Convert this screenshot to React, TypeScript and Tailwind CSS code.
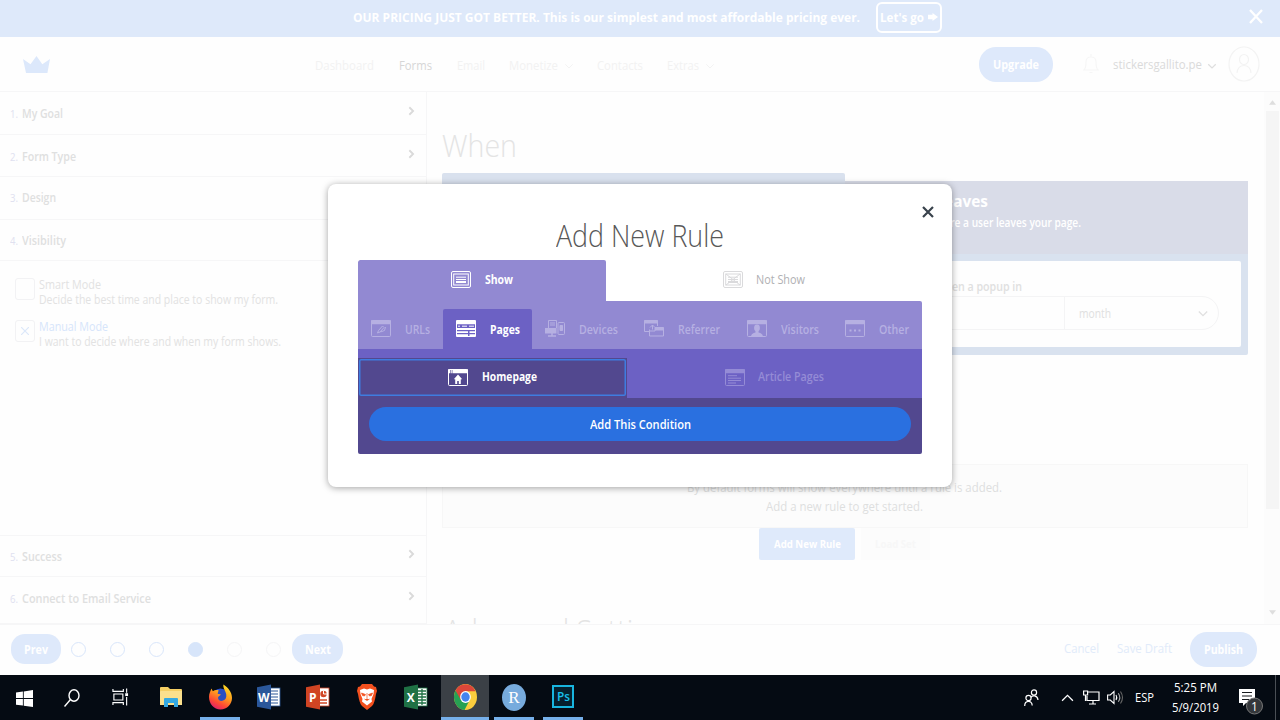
import { useLayoutEffect, useRef, useState, type ReactNode } from "react";

/* Condenses one line of text to the width of its box. */
function Fit({ className, children }: { className: string; children: ReactNode }) {
  const box = useRef<HTMLDivElement>(null);
  const text = useRef<HTMLSpanElement>(null);
  const [scale, setScale] = useState(1);
  useLayoutEffect(() => {
    if (box.current && text.current && text.current.offsetWidth > 0) {
      setScale(box.current.clientWidth / text.current.getBoundingClientRect().width);
    }
  }, []);
  return (
    <div ref={box} className={"flex shrink-0 whitespace-nowrap " + className}>
      <span ref={text} className="inline-block shrink-0 origin-left" style={{ transform: `scaleX(${scale})` }}>
        {children}
      </span>
    </div>
  );
}

function Chevron({ className, dir = "down", w = 1.6 }: { className: string; dir?: "down" | "right" | "up"; w?: number }) {
  const d = dir === "down" ? "M1 3l5 5 5-5" : dir === "up" ? "M1 9l5-5 5 5" : "M4 1.500l4.500 4.500-4.500 4.500";
  return (
    <svg viewBox="0 0 12 12" className={"shrink-0 " + className} fill="none" stroke="currentColor" strokeWidth={w}>
      <path d={d} />
    </svg>
  );
}

function PromoBar() {
  return (
    <div className="flex h-[37px] shrink-0 items-start bg-[#dee9fa] text-white">
      <Fit className="ml-[353px] mt-[8px] w-[507px] text-[13px] leading-[18px] font-bold">
        OUR PRICING JUST GOT BETTER. This is our simplest and most affordable pricing ever.
      </Fit>
      <div className="ml-4 mt-[2px] flex h-[31px] w-[66px] items-center rounded-[6px] border-2 border-white pb-[2px] pl-[2px]">
        <Fit className="w-[44px] text-[13px] leading-[18px] font-bold">Let's go</Fit>
        <svg viewBox="0 0 10 8" className="ml-[4px] h-2 w-[10px]" fill="currentColor">
          <path d="M0 1.800h4.500V0L10 4 4.500 8V6.200H0z" />
        </svg>
      </div>
      <svg viewBox="0 0 14 15" className="ml-[307px] mt-[9px] h-[15px] w-[14px]" stroke="currentColor" strokeWidth="2.300">
        <path d="M1 1l12 13M13 1L1 14" />
      </svg>
    </div>
  );
}

function NavBar() {
  return (
    <div className="flex h-[55px] shrink-0 items-center border-b border-[#f6f6f7] text-[12.500px] leading-[18px] text-[#f2f2f2]">
      <svg viewBox="0 0 27 17" className="ml-[23px] h-[17px] w-[27px] text-[#dce8fb]" fill="currentColor">
        <path d="M0 3l7.500 5.200L13.500 0l5.800 8.200L27 3l-2.600 14H3z" />
      </svg>
      <div className="flex items-center pt-[3px]">
        <Fit className="ml-[265px] w-[59px]">Dashboard</Fit>
        <Fit className="ml-[25px] w-[33px] text-[#d6d6d6]">Forms</Fit>
        <Fit className="ml-[25px] w-[28px]">Email</Fit>
        <Fit className="ml-[24px] w-[49px]">Monetize</Fit>
        <Chevron w={1.200} className="ml-[6px] mt-[2px] h-[9px] w-[10px]" />
        <Fit className="ml-[23px] w-[46px]">Contacts</Fit>
        <Fit className="ml-[24px] w-[32px]">Extras</Fit>
        <Chevron w={1.200} className="ml-[6px] mt-[2px] h-[9px] w-[10px]" />
      </div>
      <div className="ml-[264px] flex h-[35px] w-[74px] items-center justify-center rounded-[17px] bg-[#dee9fb] pt-px font-bold text-white">
        <Fit className="w-[46px]">Upgrade</Fit>
      </div>
      <svg viewBox="0 0 16 20" className="ml-[30px] h-5 w-[16px] text-[#f6f6f6]" fill="none" stroke="currentColor" strokeWidth="1.200">
        <path d="M1 16h14c-2-2-2-4-2-8 0-3-2-5-5-5S3 5 3 8c0 4 0 6-2 8zM8 3V0M6.500 18.500h3" />
      </svg>
      <div className="flex items-center pt-[2px]">
        <Fit className="ml-[14px] w-[89px] text-[#dadada]">stickersgallito.pe</Fit>
        <Chevron className="ml-[5px] mt-[2px] h-[9px] w-[10px] text-[#dedede]" />
      </div>
      <svg viewBox="0 0 32 36" className="ml-[11px] h-[36px] w-[32px] text-[#f3f3f3]" fill="none" stroke="currentColor" strokeWidth="1.200">
        <ellipse cx="16" cy="18" rx="15" ry="17" />
        <ellipse cx="16" cy="13.500" rx="4.500" ry="5" />
        <path d="M9 27c.5-5 3-7.500 7-7.500s6.500 2.500 7 7.500" />
      </svg>
    </div>
  );
}

function Step({ n, w, label, className, arrow = true }: { n: number; w: string; label: string; className: string; arrow?: boolean }) {
  return (
    <div className={"flex shrink-0 items-start border-b border-[#f6f6f7] " + className}>
      <Fit className="ml-[10px] mt-[12px] w-[8px] text-[11px] leading-[18px] text-[#e0e1f0]">{n}.</Fit>
      <Fit className={"ml-1 mt-[12px] text-[12.500px] leading-[18px] font-semibold text-[#dfe0e0] " + w}>{label}</Fit>
      <div className="grow" />
      {arrow && <Chevron dir="right" w={2.200} className="mr-[10px] mt-[13px] h-[10px] w-[10px] text-[#dadada]" />}
    </div>
  );
}

function Mode({ checked, title, titleW, text, textW }: { checked: boolean; title: string; titleW: string; text: string; textW: string }) {
  return (
    <div className="flex h-[42px] shrink-0 pl-[15px]">
      <div className="mt-px flex h-[22px] w-[20px] items-center justify-center rounded-[3px] border border-[#f2f2f4]">
        {checked && (
          <svg viewBox="0 0 8 8" className="h-2 w-2 text-[#dce8fa]" stroke="currentColor" strokeWidth="1.200">
            <path d="M0 0l8 8M8 0L0 8" />
          </svg>
        )}
      </div>
      <div className="ml-1 flex flex-col text-[12.500px] leading-[15px] text-[#e2e2e2]">
        <Fit className={titleW + (checked ? " text-[#d6e5fb]" : "")}>{title}</Fit>
        <Fit className={textW}>{text}</Fit>
      </div>
    </div>
  );
}

function Sidebar() {
  return (
    <div className="flex w-[427px] shrink-0 flex-col border-r border-[#f6f6f7]">
      <Step n={1} label="My Goal" w="w-[41px]" className="h-[43px] pt-px" />
      <Step n={2} label="Form Type" w="w-[54px]" className="h-[42px] pt-px" />
      <Step n={3} label="Design" w="w-[34px]" className="h-[43px]" />
      <Step n={4} label="Visibility" w="w-[44px]" className="h-[41px]" arrow={false} />
      <div className="flex grow flex-col border-b border-[#f6f6f7] pt-[16px]">
        <Mode checked={false} title="Smart Mode" titleW="w-[62px]" text="Decide the best time and place to show my form." textW="w-[239px]" />
        <Mode checked title="Manual Mode" titleW="w-[69px]" text="I want to decide where and when my form shows." textW="w-[242px]" />
      </div>
      <Step n={5} label="Success" w="w-[40px]" className="h-[41px]" />
      <Step n={6} label="Connect to Email Service" w="w-[129px]" className="h-[47px] pt-px" />
    </div>
  );
}

function Main() {
  return (
    <div className="flex grow flex-col overflow-hidden pl-[15px]">
      <Fit className="mt-[32px] w-[75px] text-[31px] leading-[42px] font-light text-[#e4e4e4]">When</Fit>
      <div className="mt-[7px] flex h-[182px] shrink-0 items-start">
        <div className="h-[182px] w-[403px] rounded-t-[2px] bg-[#d9e1ee]" />
        <div className="mt-2 flex h-[174px] w-[403px] flex-col rounded-r-[2px] bg-[#d9e2ef]">
          <div className="h-[73px] bg-[#d9dce8] pl-[51px] text-white">
            <Fit className="mt-[9px] w-[92px] text-[16px] leading-[22px] font-bold">User Leaves</Fit>
            <Fit className="ml-[3px] mt-[2px] w-[182px] text-[12.500px] leading-[18px] font-semibold">Show before a user leaves your page.</Fit>
          </div>
          <div className="mx-[7px] mt-[7px] flex h-[86px] flex-col rounded-[2px] bg-[#fefefe] pl-[25px] text-[12px] text-[#e0e0e0]">
            <Fit className="ml-[29px] mt-[17px] w-[116px] leading-[18px] font-semibold">Show when a popup in</Fit>
            <div className="flex h-[34px] w-[342px] rounded-full border border-[#f4f4f5]">
              <div className="w-[187px] border-r border-[#f4f4f5]" />
              <div className="flex grow items-center pt-px">
                <Fit className="ml-[14px] w-[32px]">month</Fit>
                <Chevron className="ml-[87px] h-[12px] w-[10px]" />
              </div>
            </div>
          </div>
        </div>
      </div>
      <div className="mt-[109px] flex h-[64px] w-[806px] shrink-0 flex-col items-center border border-[#f7f7f7] bg-[#fcfcfc] pt-[13px] pr-[2px] text-[13px] leading-[19px] text-[#dedfdf]">
        <Fit className="w-[315px]">By default forms will show everywhere until a rule is added.</Fit>
        <Fit className="w-[157px]">Add a new rule to get started.</Fit>
      </div>
      <div className="flex h-[32px] shrink-0 pl-[317px] text-[11px] font-bold">
        <div className="flex w-[96px] items-center justify-center rounded-[2px] bg-[#dfeafb] text-white">
          <Fit className="w-[67px]">Add New Rule</Fit>
        </div>
        <div className="ml-[6px] flex w-[69px] items-center justify-center bg-[#fcfcfc] text-[#f7f7f7]">
          <Fit className="w-[41px]">Load Set</Fit>
        </div>
      </div>
      <Fit className="ml-[2px] mt-[49px] w-[234px] text-[31px] leading-[42px] font-light text-[#e4e4e4]">Advanced Settings</Fit>
    </div>
  );
}

function Scrollbar() {
  return (
    <div className="flex w-4 shrink-0 flex-col items-center bg-[#fcfcfc] text-[#dedede]">
      <svg viewBox="0 0 8 5" className="mt-[8px] h-[5px] w-[7px]" fill="currentColor">
        <path d="M0 5l4-5 4 5z" />
      </svg>
      <div className="mt-[6px] h-[398px] w-[13px] bg-[#f5f5f5]" />
      <div className="grow" />
      <svg viewBox="0 0 8 5" className="mb-[9px] h-[5px] w-[7px]" fill="currentColor">
        <path d="M0 0l4 5 4-5z" />
      </svg>
    </div>
  );
}

function Footer() {
  const dot = "ml-[24px] h-[15px] w-[15px] rounded-full border";
  return (
    <div className="flex h-[51px] shrink-0 items-center border-t border-[#f6f6f7] pb-[2px] text-[12.500px] leading-[18px] text-[#e1ebfa]">
      <div className="ml-[11px] flex h-[30px] w-[50px] items-center justify-center rounded-[14px] bg-[#dee9fb] pt-[2px] font-bold text-white">
        <Fit className="w-[24px]">Prev</Fit>
      </div>
      <div className="ml-[10px] h-[15px] w-[15px] rounded-full border border-[#d9e6fb]" />
      <div className={dot + " border-[#d9e6fb]"} />
      <div className={dot + " border-[#d9e6fb]"} />
      <div className={dot + " border-[#d7e5fa] bg-[#d7e5fa]"} />
      <div className={dot + " border-[#f5f5f6]"} />
      <div className={dot + " border-[#f5f5f6]"} />
      <div className="ml-[11px] flex h-[30px] w-[51px] items-center justify-center rounded-[14px] bg-[#dee9fb] pt-[2px] font-bold text-white">
        <Fit className="w-[26px]">Next</Fit>
      </div>
      <Fit className="ml-[721px] w-[35px]">Cancel</Fit>
      <Fit className="ml-[18px] w-[55px]">Save Draft</Fit>
      <div className="ml-[18px] flex h-[35px] w-[67px] items-center justify-center rounded-[17px] bg-[#dee9fb] pt-[2px] font-bold text-white">
        <Fit className="w-[39px]">Publish</Fit>
      </div>
    </div>
  );
}

type IconName = "show" | "hide" | "link" | "pages" | "devices" | "referrer" | "visitors" | "other" | "home" | "article";

function RuleIcon({ name, className }: { name: IconName; className: string }) {
  const windowed = name === "link" || name === "visitors" || name === "other" || name === "home" || name === "article";
  return (
    <svg viewBox="0 0 20 17" className={"h-[17px] w-[20px] shrink-0 " + className} fill="none" stroke="currentColor">
      {windowed && (
        <>
          <rect x=".5" y=".5" width="19" height="16" rx="1" />
          <path d="M0 2.200h20" strokeWidth="4" strokeDasharray={name === "home" ? "2 .6 1.200 .6 30" : undefined} />
        </>
      )}
      {(name === "show" || name === "hide") && (
        <>
          <rect x=".5" y=".5" width="19" height="16" rx="1.500" />
          <rect x="2.700" y="3" width="14.600" height="11" />
          <path d="M5 6.200h10M5 8.500h10" />
          <path d="M5 11h10" strokeWidth="1.800" />
          {name === "hide" && <path d="M3 3l14 11M17 3l-14 11" />}
        </>
      )}
      {name === "link" && <path d="M6.500 13l2.500-1 4-4.500-1.500-1.500-4 4.500zM9.500 12l4-1.500 1-3.500" />}
      {name === "other" && <path d="M4.500 10.500h2M9 10.500h2M13.500 10.500h2" strokeWidth="1.800" />}
      {name === "visitors" && (
        <g fill="currentColor" stroke="none">
          <ellipse cx="10" cy="8" rx="2.900" ry="3.400" />
          <path d="M4 17c0-3 2-3.700 4.500-4.500v-2h3v2c2.500.8 4.500 1.500 4.500 4.500z" />
        </g>
      )}
      {name === "home" && <path d="M10 5.500l-4.200 4.700h1.400V15h2v-3h1.600v3h2v-4.800h1.400z" fill="currentColor" stroke="none" />}
      {name === "article" && <path d="M3 6.700h9M3 9.200h13M3 11.500h13M3 14h8" />}
      {name === "pages" && (
        <>
          <rect x="0" y="0" width="20" height="4.200" rx="1" fill="currentColor" stroke="none" />
          <path d="M.5 3v13.500h19V3" />
          <path d="M2 6.200h2M6 6.200h5M13 6.200h5" strokeWidth="1" />
          <path d="M0 9h20M1 12.200h11M13.500 12.200h6M1 15.200h11M13.500 15.200h6" strokeWidth="1.800" />
        </>
      )}
      {name === "devices" && (
        <>
          <path d="M3.500 8V.5h8V8M5 3h5M5 5h5" />
          <rect x="13" y="2.500" width="6.500" height="12" rx="1" />
          <path d="M15 5.500h2.500v5H15z" fill="currentColor" />
          <rect x=".5" y="8.500" width="10.500" height="4.500" fill="currentColor" />
          <path d="M3 16h8M7 13v3" strokeWidth="1.500" />
        </>
      )}
      {name === "referrer" && (
        <>
          <path d="M5 11.500H.5V.5h13V6" />
          <path d="M0 2h14" strokeWidth="3" />
          <path d="M8.500 5v4.500M6 7.500l2.500-2.500 2.500 2.500M5.500 9.500v6.500h14V7.500H11v3.500H5.500" />
          <path d="M11 9h8.500" strokeWidth="3" />
        </>
      )}
    </svg>
  );
}

function CategoryTab({ icon, label, labelW, className }: { icon: IconName; label: string; labelW: string; className: string }) {
  return (
    <div className={"flex h-[40px] items-center rounded-t-[2px] pl-[13px] " + className}>
      <RuleIcon name={icon} className="-mt-px" />
      <Fit className={"ml-[14px] pt-px " + labelW}>{label}</Fit>
    </div>
  );
}

function RuleDialog() {
  const faded = "text-[#b6b0e2]";
  return (
    <div className="absolute left-[328px] top-[184px] flex h-[303px] w-[624px] flex-col rounded-[8px] bg-white px-[30px] shadow-[0_1px_7px_rgba(0,0,0,0.36)]">
      <div className="flex h-[34px] justify-end">
        <svg viewBox="0 0 12 12" className="-mr-[12px] mt-[22px] h-[12px] w-[12px] text-[#39424c]" stroke="currentColor" strokeWidth="2.200">
          <path d="M1 1l10 10M11 1L1 11" />
        </svg>
      </div>
      <div className="-mt-1 flex h-[46px] justify-center">
        <Fit className="w-[168px] text-[31px] leading-[42px] font-light text-[#585858]">Add New Rule</Fit>
      </div>
      <div className="flex h-[194px] shrink-0 flex-col overflow-hidden rounded-[2px] text-[12.500px] leading-[18px]">
        <div className="flex h-[41px] shrink-0">
          <div className="flex w-[248px] items-center rounded-t-[2px] bg-[#9289d2] pb-[2px] pl-[93px] font-bold text-white">
            <RuleIcon name="show" className="" />
            <Fit className="ml-[14px] w-[28px] pt-px">Show</Fit>
          </div>
          <div className="flex items-center pb-[2px] pl-[117px] text-[#b0b0b3]">
            <RuleIcon name="hide" className="text-[#dadadc]" />
            <Fit className="ml-[13px] w-[49px] pt-px">Not Show</Fit>
          </div>
        </div>
        <div className={"flex h-[48px] shrink-0 items-end rounded-tr-[2px] bg-[#9289d2] font-semibold " + faded}>
          <CategoryTab icon="link" label="URLs" labelW="w-[25px]" className="w-[85px]" />
          <CategoryTab icon="pages" label="Pages" labelW="w-[30px]" className="w-[89px] bg-[#6c61c4] font-bold text-white" />
          <CategoryTab icon="devices" label="Devices" labelW="w-[39px]" className="w-[99px]" />
          <CategoryTab icon="referrer" label="Referrer" labelW="w-[42px]" className="w-[103px]" />
          <CategoryTab icon="visitors" label="Visitors" labelW="w-[38px]" className="w-[98px]" />
          <CategoryTab icon="other" label="Other" labelW="w-[30px]" className="w-[90px]" />
        </div>
        <div className="flex h-[49px] shrink-0 items-end bg-[#6c61c4]">
          <div className="flex h-[40px] w-[269px] bg-[#52488f] p-[1px] pb-[2px]">
            <div className="flex w-[267px] items-center rounded-[2px] pb-px pl-[89px] font-bold text-white shadow-[inset_0_0_0_1.5px_#3f7ce0]">
              <RuleIcon name="home" className="" />
              <Fit className="ml-[14px] w-[55px]">Homepage</Fit>
            </div>
          </div>
          <div className="flex h-[40px] items-center pb-[2px] pl-[98px] font-semibold text-[#958cd6]">
            <RuleIcon name="article" className="" />
            <Fit className="ml-[13px] w-[66px]">Article Pages</Fit>
          </div>
        </div>
        <div className="flex h-[56px] shrink-0 items-start justify-center bg-[#52488f] pt-[9px]">
          <div className="flex h-[34px] w-[542px] items-center justify-center rounded-full bg-[#2a70e0] pt-[2px] font-semibold text-white">
            <Fit className="w-[101px]">Add This Condition</Fit>
          </div>
        </div>
      </div>
    </div>
  );
}

function OfficeIcon({ letter, color, dark, kind }: { letter: string; color: string; dark: string; kind: "lines" | "chart" | "grid" }) {
  return (
    <svg viewBox="0 0 24 26" className="mt-[2px] h-[26px] w-[24px]">
      <rect x="12" y="4" width="11" height="18" fill="#fff" stroke={color} strokeWidth=".8" />
      {kind === "lines" && <path d="M14 7h7M14 10h7M14 13h7M14 16h7M14 19h7" stroke={color} strokeWidth="1.200" />}
      {kind === "chart" && (
        <>
          <circle cx="17.500" cy="10" r="3.200" fill={color} />
          <path d="M17.500 10V6.500M17.500 10H21M14 16h7M14 19h7" stroke="#fff" strokeWidth="1" />
          <path d="M14 16h7M14 19h7" stroke={color} strokeWidth="1.400" />
        </>
      )}
      {kind === "grid" && <path d="M14 7h8M14 10h8M14 13h8M14 16h8M14 19h8M18 5v16" stroke={color} strokeWidth="1.300" />}
      <path d="M0 3.200L14 .5v25L0 22.800z" fill={dark} />
      <text x="6.800" y="17.500" textAnchor="middle" fill="#fff" fontFamily="Open Sans, sans-serif" fontWeight="700" fontSize="12">
        {letter}
      </text>
    </svg>
  );
}

function TaskButton({ className, underline, children }: { className: string; underline?: boolean; children: ReactNode }) {
  return (
    <div className={"flex h-[45px] shrink-0 flex-col items-center " + className}>
      <div className="flex h-[42px] grow items-center">{children}</div>
      <div className={"h-[3px] shrink-0 self-stretch " + (underline ? "bg-[#76b0ea]" : "")} />
    </div>
  );
}

function Taskbar() {
  return (
    <div className="flex h-[45px] shrink-0 items-start bg-[#050b13] text-white">
      <TaskButton className="w-[48px]">
        <svg viewBox="0 0 18 18" className="mt-1 h-[19px] w-[17px]" fill="#fff">
          <path d="M0 2.600l7.300-1v7H0zM8.200 1.500L18 0v8.600H8.200zM0 9.500h7.300v7L0 15.500zM8.200 9.500H18V18l-9.800-1.400z" />
        </svg>
      </TaskButton>
      <TaskButton className="w-[48px]">
        <svg viewBox="0 0 16 18" className="mt-1 h-[18px] w-[16px]" fill="none" stroke="#fff" strokeWidth="1.400">
          <ellipse cx="10" cy="6.500" rx="5" ry="5.700" />
          <path d="M6.500 10.500L.5 17.500" />
        </svg>
      </TaskButton>
      <TaskButton className="w-[48px]">
        <svg viewBox="0 0 18 18" className="mt-[2px] h-[18px] w-[17px]" fill="none" stroke="#fff" strokeWidth="1.200">
          <path d="M1 .5v2.500h11V.5M1 17.500v-2.500h11v2.500M2 5.800h9.500v6.400H2zM15.500 0v4.500M15.500 9v9" />
          <path d="M14 6.500h3" strokeWidth="3" />
        </svg>
      </TaskButton>
      <TaskButton className="ml-[3px] w-[48px]">
        <svg viewBox="0 0 22 22" className="mt-[2px] h-[22px] w-[22px]">
          <path d="M0 2q0-1 1-1h7l2 2h11q1 0 1 1v15H0z" fill="#f5cf64" />
          <path d="M1 5h21v14H0V6q0-1 1-1z" fill="#fbe08d" />
          <path d="M4 21v-8q0-1 1-1h12q1 0 1 1v8h-4v-4H8v4z" fill="#35a9e2" />
        </svg>
      </TaskButton>
      <TaskButton className="ml-[5px] w-[40px]" underline>
        <svg viewBox="0 0 24 26" className="mt-[2px] h-[26px] w-[23px]">
          <defs>
            <linearGradient id="fox" x1="0.800" y1="0" x2="0.300" y2="1">
              <stop offset="0" stopColor="#ffe226" />
              <stop offset=".45" stopColor="#ff9a1f" />
              <stop offset=".75" stopColor="#ff4a34" />
              <stop offset="1" stopColor="#e01f6b" />
            </linearGradient>
          </defs>
          <circle cx="12" cy="13" r="9" fill="#2b4fc4" />
          <path d="M15 0c5 3 9 8 9 14s-5 12-12 12S0 20 0 13c0-4 1.500-6 2.500-9l1.500 3c2-1.500 4-1.500 6-1l-1 3.500 3.500 1-3 2.500c-.5 3 2 4.500 4.500 4 3-.5 4.500-3 4-6.500-.5-4-3.500-6-3-10.500z" fill="url(#fox)" />
        </svg>
      </TaskButton>
      <TaskButton className="ml-[9px] w-[40px]"><OfficeIcon letter="W" color="#2b5797" dark="#2b579a" kind="lines" /></TaskButton>
      <TaskButton className="ml-[9px] w-[40px]"><OfficeIcon letter="P" color="#d24726" dark="#d04423" kind="chart" /></TaskButton>
      <TaskButton className="ml-[9px] w-[40px]">
        <svg viewBox="0 0 20 26" className="mt-[2px] h-[26px] w-[20px]">
          <path d="M5 0h10l2 2.500L19 3l1 4-1 3c-1 6-2 10-4 12l-5 4-5-4c-2-2-3-6-4-12L0 7l1-4 2-.5z" fill="#f4501e" />
          <path d="M3 6l4-1.500 3 1 3-1L17 6l-.5 4-2 5 .5 2.500-5 4-5-4 .5-2.500-2-5z" fill="#fff" />
          <path d="M4.500 9l4 1.500-1 1.500-2-.5zM15.500 9l-4 1.500 1 1.500 2-.5zM10 9v6M7.500 15l2.500 1.500 2.500-1.500" fill="#f4501e" stroke="#f4501e" strokeWidth=".7" />
        </svg>
      </TaskButton>
      <TaskButton className="ml-[9px] w-[40px]"><OfficeIcon letter="X" color="#1f7244" dark="#1f7145" kind="grid" /></TaskButton>
      <TaskButton className="ml-[5px] w-[48px] bg-[#3b4046]" underline>
        <svg viewBox="0 0 24 24" preserveAspectRatio="none" className="mt-[2px] h-[26px] w-[23px]">
          <circle cx="12" cy="12" r="12" fill="#fbcd3d" />
          <path d="M1.600 6A12 12 0 0 0 11 24l5.500-9.500L12 12z" fill="#27a153" />
          <path d="M1.600 6a12 12 0 0 1 20.900.6H12L7 14.500z" fill="#dc4639" />
          <circle cx="12" cy="12" r="5.600" fill="#fff" />
          <circle cx="12" cy="12" r="4.400" fill="#4584ee" />
        </svg>
      </TaskButton>
      <TaskButton className="ml-[5px] w-[40px]" underline>
        <svg viewBox="0 0 24 27" className="mt-[3px] h-[27px] w-[24px]">
          <ellipse cx="12" cy="13.500" rx="12" ry="13.500" fill="#77abdd" />
          <text x="12" y="19" textAnchor="middle" fill="#fff" fontFamily="Liberation Serif, serif" fontSize="17">R</text>
        </svg>
      </TaskButton>
      <TaskButton className="ml-[9px] w-[40px]" underline>
        <div className="flex h-[23px] w-[22px] items-center justify-center border-2 border-[#18b5df] bg-[#06202e] text-[13px] font-semibold text-[#18c0ec]">
          <Fit className="w-[13px] leading-[18px]">Ps</Fit>
        </div>
      </TaskButton>
      <div className="ml-[441px] flex h-[45px] items-center text-[12.500px] leading-[20px]">
        <svg viewBox="0 0 15 18" className="h-[18px] w-[15px]" fill="none" stroke="#fff" strokeWidth="1.200">
          <circle cx="10" cy="3.500" r="2.600" />
          <circle cx="4.500" cy="9" r="2.600" />
          <path d="M7 8.500c1-2.500 6.500-2.500 7 2.500M.7 17c0-6 7.500-6 7.500-.5" />
        </svg>
        <Chevron dir="up" w={1.200} className="ml-[22px] h-[13px] w-[13px]" />
        <svg viewBox="0 0 17 15" className="ml-[9px] h-[15px] w-[17px]" fill="none" stroke="#fff" strokeWidth="1.200">
          <path d="M5 2h11v8.500H4V6M10 10.500V14M6 14h7M.6 1h4v4h-4zM2.500 5v6" />
        </svg>
        <svg viewBox="0 0 17 15" className="ml-[7px] h-[15px] w-[17px]" fill="none" stroke="#fff" strokeWidth="1.100">
          <path d="M.6 5h2.700L7 1.500v12L3.300 10H.600zM9 5q1.500 2.500 0 5" />
          <path d="M11.300 3.200q3 4.300 0 8.600" stroke="#aaa" />
          <path d="M13.500 1.500q4 6 0 12" stroke="#666" />
        </svg>
        <Fit className="ml-[11px] w-[19px]">ESP</Fit>
        <div className="ml-[17px] flex w-[48px] flex-col items-center">
          <Fit className="w-[43px]">5:25 PM</Fit>
          <Fit className="w-[47px]">5/9/2019</Fit>
        </div>
        <svg viewBox="0 0 25 28" className="ml-[20px] mt-[8px] h-[28px] w-[25px]">
          <path d="M0 1h16v14H7l-3 3v-3H0z" fill="#fff" />
          <path d="M3 4.500h10M3 8h10M3 11.500h7" stroke="#16191d" strokeWidth="1.200" />
          <circle cx="15.500" cy="18" r="8" fill="#34373b" stroke="#777" />
          <text x="15.500" y="22.500" textAnchor="middle" fill="#fff" fontFamily="Open Sans, sans-serif" fontSize="12">1</text>
        </svg>
        <div className="ml-[11px] h-[45px] w-px bg-[#4a4f55]" />
      </div>
    </div>
  );
}

export default function App() {
  return (
    <div className="relative flex h-[720px] w-[1280px] flex-col overflow-hidden bg-[#fefefe] font-['Open_Sans','Noto_Sans',sans-serif]">
      <PromoBar />
      <NavBar />
      <div className="flex h-[532px] shrink-0">
        <Sidebar />
        <Main />
        <Scrollbar />
      </div>
      <Footer />
      <Taskbar />
      <RuleDialog />
    </div>
  );
}
